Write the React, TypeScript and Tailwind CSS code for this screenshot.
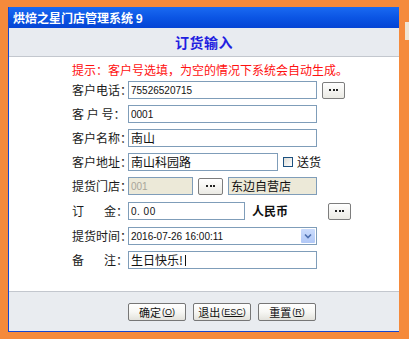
import React from "react";

const cjk = "font-['Noto_Sans_CJK_SC',sans-serif]";
const num = "font-['Liberation_Sans','Noto_Sans_CJK_SC',sans-serif]";

function Label({ children }: { children: React.ReactNode }) {
  return (
    <div className={`w-[56px] shrink-0 flex items-center text-[12px] leading-none text-[#1a1a1a] whitespace-pre ${cjk}`}>
      {children}
    </div>
  );
}

function Dots({ className = "" }: { className?: string }) {
  return (
    <button
      className={`h-[17px] w-[23px] shrink-0 flex items-center justify-center gap-[1.5px] rounded-[2px] border border-[#7d7d7d] bg-gradient-to-b from-white to-[#ebeae4] ${className}`}
    >
      <span className="w-[2px] h-[2px] bg-[#222]" />
      <span className="w-[2px] h-[2px] bg-[#222]" />
      <span className="w-[2px] h-[2px] bg-[#222]" />
    </button>
  );
}

function Field({
  w,
  children,
  disabled,
  className = "",
}: {
  w: string;
  children?: React.ReactNode;
  disabled?: boolean;
  className?: string;
}) {
  return (
    <div
      className={`${w} h-[18px] shrink-0 flex items-center pl-[2px] border border-[#7f9db9] ${
        disabled ? "bg-[#ece9d8]" : "bg-white"
      } ${className}`}
    >
      {children}
    </div>
  );
}

function FootButton({ text, k }: { text: string; k: string }) {
  return (
    <button className="h-[18px] w-[58px] flex items-center justify-center rounded-[2px] border border-[#767676] bg-gradient-to-b from-white via-[#f7f7f4] to-[#e3e2dc] text-[11px] leading-none text-[#111]">
      <span className={cjk}>{text}</span>
      <span className={`${num} text-[9px] ml-[1px]`}>
        (<span className="underline">{k}</span>)
      </span>
    </button>
  );
}

export default function App() {
  return (
    <div className="w-[409px] h-[339px] bg-[#f58a3b] flex items-start pl-[8px] pt-[7px] overflow-hidden">
      <div className="w-[391px] h-[325px] flex flex-col border-l border-b border-[#1646d0] bg-white">
        {/* title bar */}
        <div className="h-[21px] shrink-0 flex items-center pl-[4px] bg-gradient-to-b from-[#1a6af2] via-[#0b55e4] to-[#0544d4]">
          <span className={`text-white font-bold text-[12px] leading-none ${cjk}`}>烘焙之星门店管理系统 9</span>
        </div>

        {/* header */}
        <div className="h-[29px] shrink-0 flex items-center justify-center bg-[#e8ebf0] border-b border-[#c3c7ce]">
          <span className={`text-[#1f20e0] font-bold text-[14px] leading-none tracking-[0.5px] ${cjk}`}>订货输入</span>
        </div>

        {/* body */}
        <div className="flex-1 flex flex-col pl-[63px] pt-[6px]">
          <div className={`h-[14px] flex items-center text-[12px] leading-none text-[#ff1010] ${cjk}`}>
            提示：客户号选填，为空的情况下系统会自动生成。
          </div>

          <div className="mt-[4px] flex flex-col gap-[6px]">
            <div className="flex items-center h-[18px]">
              <Label>客户电话：</Label>
              <Field w="w-[189px]">
                <span className={`${num} text-[10px] text-[#111]`}>75526520715</span>
              </Field>
              <Dots className="ml-[5px]" />
            </div>

            <div className="flex items-center h-[18px]">
              <Label>客 户 号：</Label>
              <Field w="w-[189px]">
                <span className={`${num} text-[10px] text-[#111]`}>0001</span>
              </Field>
            </div>

            <div className="flex items-center h-[18px]">
              <Label>客户名称：</Label>
              <Field w="w-[189px]">
                <span className={`${cjk} text-[12px] leading-none text-[#111]`}>南山</span>
              </Field>
            </div>

            <div className="flex items-center h-[18px]">
              <Label>客户地址：</Label>
              <Field w="w-[150px]">
                <span className={`${cjk} text-[12px] leading-none text-[#111]`}>南山科园路</span>
              </Field>
              <span className="ml-[5px] w-[10px] h-[10px] border border-[#1c5180] bg-gradient-to-br from-[#dcdcd6] to-white" />
              <span className={`ml-[4px] ${cjk} text-[12px] leading-none text-[#111]`}>送货</span>
            </div>

            <div className="flex items-center h-[18px]">
              <Label>提货门店：</Label>
              <Field w="w-[65px]" disabled>
                <span className={`${num} text-[10px] text-[#a8a59a]`}>001</span>
              </Field>
              <Dots className="ml-[5px] w-[25px]" />
              <Field w="w-[89px]" disabled className="ml-[5px]">
                <span className={`${cjk} text-[12px] leading-none text-[#111]`}>东边自营店</span>
              </Field>
            </div>

            <div className="flex items-center h-[18px] mt-[1px]">
              <Label>
                订<span className="inline-block w-[22px]" />金：
              </Label>
              <Field w="w-[117px]">
                <span className={`${num} text-[10px] text-[#111] tracking-[0.5px]`}>0. 00</span>
              </Field>
              <span className={`ml-[7px] ${cjk} font-bold text-[12px] leading-none text-[#111]`}>人民币</span>
              <Dots className="ml-[40px]" />
            </div>

            <div className="flex items-center h-[18px] mt-[1px]">
              <Label>提货时间：</Label>
              <div className="w-[189px] h-[18px] flex items-center justify-between pl-[2px] pr-[1px] border border-[#7f9db9] bg-white">
                <span className={`${num} text-[10px] text-[#111]`}>2016-07-26 16:00:11</span>
                <span className="w-[14px] h-[14px] flex items-center justify-center rounded-[1px] bg-gradient-to-b from-[#cbdcfc] to-[#b1c8f6]">
                  <svg width="8" height="6" viewBox="0 0 8 6">
                    <path d="M1 1.5 L4 4.5 L7 1.5" fill="none" stroke="#4d6fae" strokeWidth="1.6" />
                  </svg>
                </span>
              </div>
            </div>

            <div className="flex items-center h-[18px]">
              <Label>
                备<span className="inline-block w-[22px]" />注：
              </Label>
              <Field w="w-[189px]">
                <span className={`${cjk} text-[12px] leading-none text-[#111]`}>生日快乐!</span>
                <span className="ml-[2px] w-px h-[11px] bg-[#111]" />
              </Field>
            </div>
          </div>
        </div>

        {/* footer */}
        <div className="h-[40px] shrink-0 flex items-start gap-[7px] pl-[119px] pt-[11px] bg-[#e9ecf0] border-t border-[#c3c7ce]">
          <FootButton text="确定" k="O" />
          <FootButton text="退出" k="ESC" />
          <FootButton text="重置" k="R" />
        </div>
      </div>
      <div className="ml-[6px] mt-[15px] w-[4px] h-[18px] bg-[#efe4d2]" />
    </div>
  );
}
